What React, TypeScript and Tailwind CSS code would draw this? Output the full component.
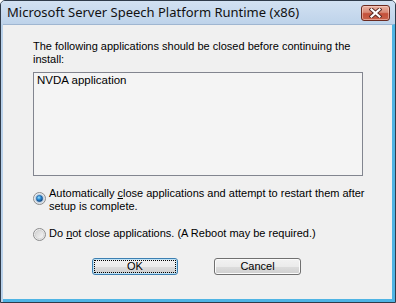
import React from "react";

function Radio({ checked, id }: { checked: boolean; id: string }) {
  return (
    <svg width="13" height="13" viewBox="0 0 13 13" className="shrink-0 block">
      <defs>
        <linearGradient id={`${id}-o`} x1="0" y1="0" x2="1" y2="1">
          <stop offset="0" stopColor="#f4f4f4" />
          <stop offset="1" stopColor="#e2e2e2" />
        </linearGradient>
        <linearGradient id={`${id}-i`} x1="0" y1="0" x2="1" y2="1">
          <stop offset="0" stopColor={checked ? "#c8ddf0" : "#d0d0d0"} />
          <stop offset="1" stopColor={checked ? "#f0f6fb" : "#f8f8f8"} />
        </linearGradient>
        <radialGradient id={`${id}-d`} cx="0.4" cy="0.35" r="0.7">
          <stop offset="0" stopColor="#9be0fb" />
          <stop offset="0.45" stopColor="#2a8ad4" />
          <stop offset="1" stopColor="#0f3f78" />
        </radialGradient>
      </defs>
      <circle cx="6.5" cy="6.5" r="6" fill={`url(#${id}-o)`} stroke="#8a8b8c" strokeWidth="1" />
      <circle cx="6.5" cy="6.5" r="4.3" fill={`url(#${id}-i)`} stroke={checked ? "#a9c4df" : "#c9c9c9"} strokeWidth="0.6" />
      {checked && <circle cx="6.5" cy="6.5" r="3.2" fill={`url(#${id}-d)`} stroke="#1a4f86" strokeWidth="0.5" />}
    </svg>
  );
}

function CloseButton() {
  return (
    <div className="w-[29px] h-[16px] mt-[4px] rounded-[3px] border border-[#6b2a20] bg-[linear-gradient(#eab3a4_0%,#d98a76_45%,#c4503a_55%,#c8624b_100%)] shadow-[inset_0_0_0_1px_rgba(255,220,210,0.5)] flex items-center justify-center">
      <svg width="13" height="10" viewBox="0 0 13 10">
        <path d="M2.5 1.5 L10.5 8.5 M10.5 1.5 L2.5 8.5" stroke="#5a2a24" strokeWidth="4" strokeLinecap="square" />
        <path d="M2.5 1.5 L10.5 8.5 M10.5 1.5 L2.5 8.5" stroke="#ffffff" strokeWidth="2.2" strokeLinecap="square" />
      </svg>
    </div>
  );
}

export default function App() {
  return (
    <div className="w-[396px] h-[303px] flex flex-col bg-[#b9d1ea] border border-[#2f3b4a] rounded-t-[5px] overflow-hidden">
      <div className="h-[23px] shrink-0 flex items-start justify-between pl-[6px] pr-[5px] bg-[linear-gradient(#d2e1f2,#bed3ea)]">
        <span className="font-['Noto_Sans',sans-serif] text-[13px] leading-[22px] text-[#111] whitespace-nowrap">
          Microsoft Server Speech Platform Runtime (x86)
        </span>
        <CloseButton />
      </div>
      <div className="flex-1 ml-[2px] bg-[#f0f0f0] border-r-[3px] border-b-[3px] border-[#4fb4e4] border-t border-t-[#9fb6d1] flex flex-col font-['Liberation_Sans',Arial,sans-serif] text-[11px] leading-[13px] text-black">
        <div className="pt-[15px] pl-[30px]">
          <p>
            The following applications should be closed before continuing the
            <br />
            install:
          </p>
          <div className="mt-[6px] w-[330px] h-[104px] border border-[#82858f] bg-[#f4f4f4] pl-[3px] pt-[1px] text-[11.5px]">
            NVDA application
          </div>
          <div className="mt-[11px] flex items-start gap-[3px]">
            <div className="mt-[5px]">
              <Radio checked id="r1" />
            </div>
            <span>
              Automatically <span className="underline">c</span>lose applications and attempt to restart them after
              <br />
              setup is complete.
            </span>
          </div>
          <div className="mt-[14px] flex items-start gap-[3px]">
            <div className="mt-[1px]">
              <Radio checked={false} id="r2" />
            </div>
            <span>
              Do <span className="underline">n</span>ot close applications. (A Reboot may be required.)
            </span>
          </div>
        </div>
        <div className="mt-[17px] pl-[89px] flex gap-[36px]">
          <div className="w-[86px] h-[17px] rounded-[3px] border border-[#3c7fb1] bg-[linear-gradient(#f2f2f2_0%,#ebebeb_50%,#dddddd_50%,#cfcfcf_100%)] shadow-[inset_0_0_0_1px_#bfe3f7] p-[1px]">
            <div className="w-full h-full border border-dotted border-black flex items-center justify-center leading-[11px]">
              OK
            </div>
          </div>
          <div className="w-[87px] h-[17px] rounded-[3px] border border-[#707070] bg-[linear-gradient(#f2f2f2_0%,#ebebeb_50%,#dddddd_50%,#cfcfcf_100%)] shadow-[inset_0_0_0_1px_#fbfbfb] flex items-center justify-center">
            Cancel
          </div>
        </div>
      </div>
    </div>
  );
}
